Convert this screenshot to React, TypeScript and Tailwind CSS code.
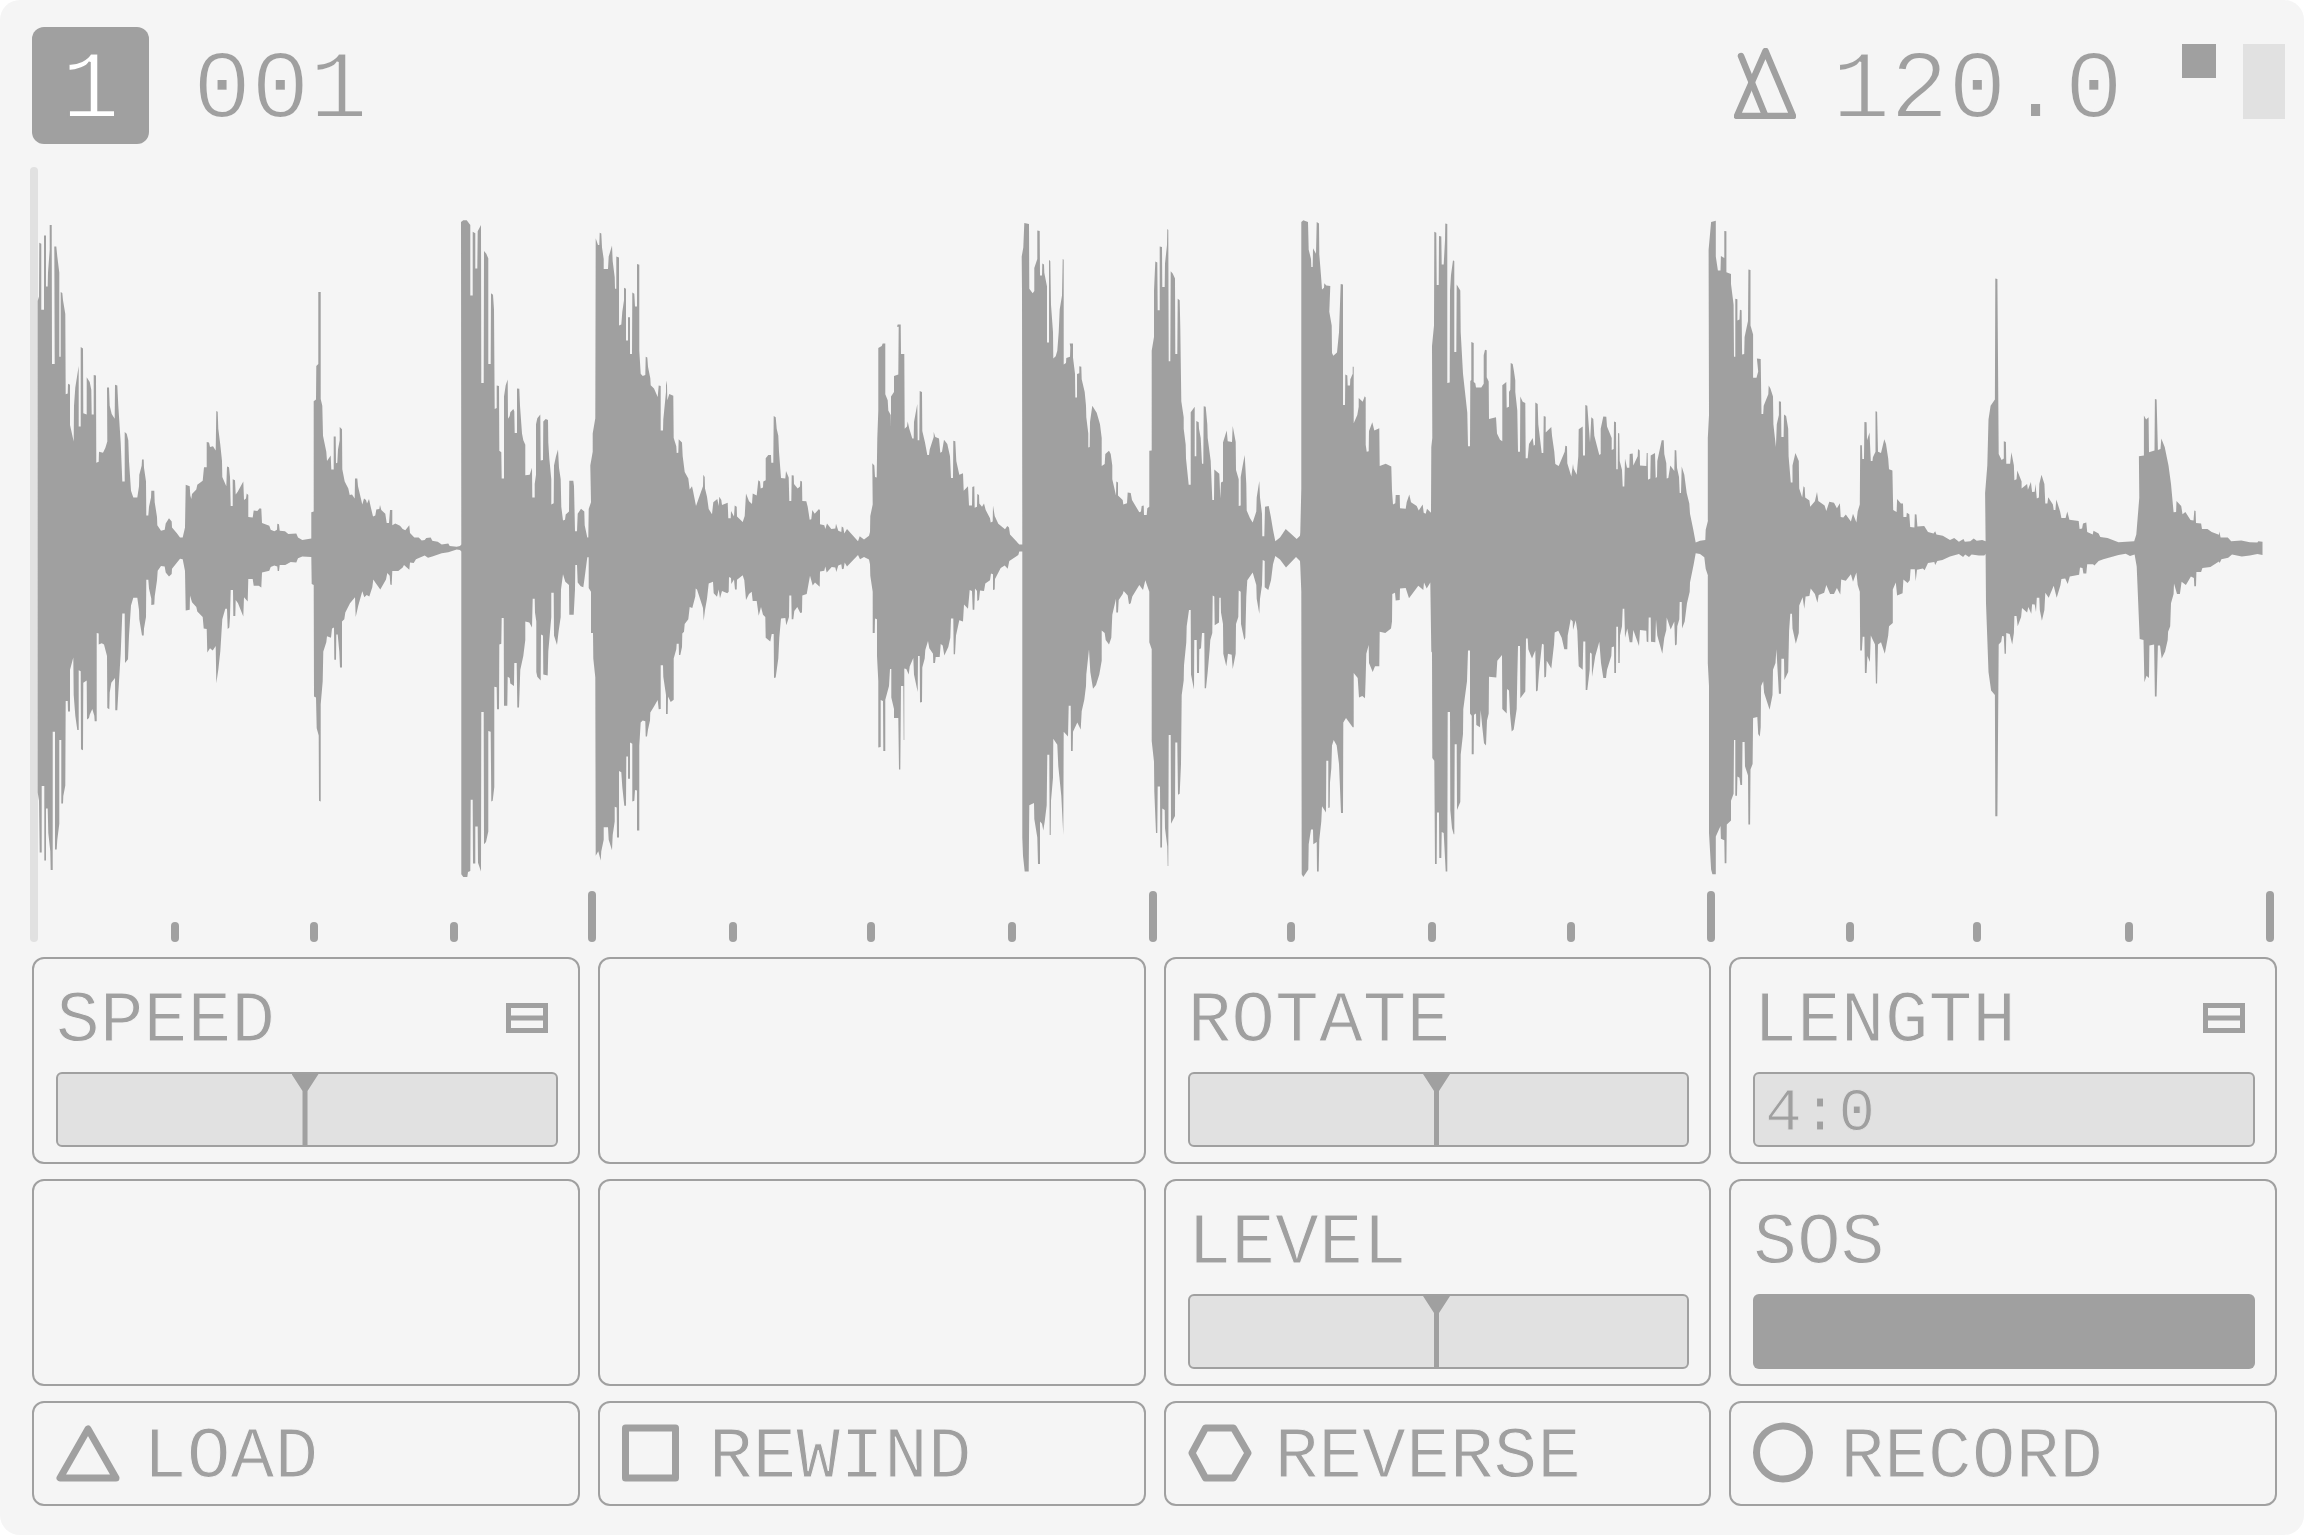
import type { ReactNode } from "react";

type Slice = {
  at: number;
  scale: number;
  upper: string;
  lower: string;
};

// Envelope of the loop, cut into slices. Every slice starts at its own x and
// holds the upper and the lower edge as "x,y" pairs.
const slices: Slice[] = [
  {
    at: 0,
    scale: 3,
    upper:
      "113,780 113,242 117,232 118,115 124,117 124,261 132,261 132,99 138,99 138,210 143,210 144,180 149,130 149,76 155,76 156,379 164,379 163,123 169,123 172,145 178,180 178,363 182,363 182,222 187,224 189,240 196,270 197,445 203,443 204,422 210,424 210,512 221,548 222,470 226,430 236,383 236,515 242,515 242,342 249,345 250,486 260,489 260,408 269,418 274,435 275,489 281,489 281,403 288,404 289,594 296,592 297,570 309,572 316,562 322,548 321,430 327,430 329,470 335,488 344,498 345,424 352,426 355,470 362,550 367,635 374,635 374,527 380,531 385,545 387,590 393,655 400,670 412,670 417,645 418,620 425,600 426,587 431,587 432,605 438,635 439,709 445,709 447,690 453,670 454,655 463,655 464,680 471,712 472,730 483,742 494,740 497,726 507,715 515,722 516,735 530,747 540,757 548,757 555,735 557,642 569,645 571,665 574,673 576,662 589,652 592,642 608,633 612,604 620,604 620,549 627,550 630,560 639,558 647,567 649,481 653,483 655,520 661,555 666,590 667,625 679,645 681,602 687,604 690,625 692,688 698,688 698,630 705,632 707,663 713,657 730,635 732,675 738,672 740,661 745,664 745,712 758,713 761,698 772,699 779,693 784,694 786,725 808,731 812,740 823,743 831,740 832,727 837,728 839,742 855,743 865,749 889,748 894,757 907,762 934,759 934,702 941,700 941,460 948,456 949,383 955,379 955,222 962,222 962,455 967,470 969,535 979,570 981,590 992,578 994,609 1001,609 1001,537 1007,537 1008,595 1012,594 1014,565 1019,545 1019,516 1026,521 1027,608 1034,635 1045,650 1049,664 1056,663 1064,672 1065,628 1072,628 1074,645 1087,685 1092,672 1098,675 1101,683 1107,673 1112,690 1119,711 1126,709 1129,696 1138,695 1140,686 1144,697 1156,705 1160,725 1167,725 1170,697 1177,697 1177,730 1186,726 1200,731 1208,738 1216,741 1228,730 1230,747 1243,757 1256,757 1265,763 1274,762 1279,758 1292,757 1297,764 1313,766 1325,772 1345,770 1349,775 1370,777 1380,775",
    lower:
      "113,1312 117,1330 119,1443 125,1443 125,1298 133,1298 133,1460 138,1460 138,1347 143,1347 145,1400 151,1440 152,1481 158,1481 158,1180 165,1180 165,1436 170,1436 172,1415 178,1380 178,1198 184,1198 184,1336 189,1336 190,1320 196,1297 197,1113 203,1113 204,1136 210,1136 210,1045 220,1018 221,1100 226,1145 232,1176 236,1176 236,1046 242,1048 243,1218 249,1220 250,1073 260,1068 261,1153 267,1150 269,1143 277,1130 283,1145 284,1157 290,1157 290,965 296,966 296,990 305,987 312,990 321,1015 322,1128 328,1131 329,1095 334,1073 345,1063 346,1133 352,1133 355,1095 362,1010 367,922 374,922 375,1030 384,1022 387,970 393,905 400,888 412,888 417,915 418,935 426,970 431,970 432,955 438,930 439,849 445,849 447,868 454,890 454,904 463,903 464,885 471,850 473,829 483,819 494,820 497,833 507,842 515,836 516,825 540,803 548,804 555,830 557,916 569,914 570,883 576,898 589,908 592,918 608,930 611,955 620,956 622,1007 630,998 638,1003 647,993 649,1074 655,1045 661,1005 667,935 676,912 681,912 683,956 688,953 690,930 692,871 699,871 700,928 706,928 707,893 714,900 730,929 732,887 743,896 745,847 758,847 761,862 776,862 784,866 786,833 808,829 812,821 823,818 832,820 833,830 837,830 839,817 856,817 872,810 889,811 894,802 907,798 934,799 935,858 941,860 942,1103 948,1105 950,1172 956,1188 957,1330 962,1332 962,1120 968,1070 970,1005 979,985 981,972 993,975 996,955 1002,953 1003,1023 1008,1023 1009,968 1013,968 1018,1005 1020,1040 1026,1040 1026,940 1033,935 1036,920 1050,900 1065,887 1067,930 1075,905 1087,874 1093,887 1100,882 1108,885 1117,865 1120,848 1126,855 1141,870 1158,848 1162,834 1169,840 1171,859 1175,860 1177,830 1195,830 1208,822 1212,817 1228,827 1230,811 1241,812 1248,804 1274,796 1284,801 1297,798 1325,791 1345,789 1370,783 1380,784",
  },
  {
    at: 440,
    scale: 3,
    upper:
      "64,772 63,70 70,66 80,66 91,76 91,230 98,230 98,91 106,94 106,171 112,171 113,90 123,76 124,420 131,420 132,133 139,139 145,149 145,379 152,379 153,225 159,228 162,260 164,477 170,475 170,426 177,427 178,568 184,571 185,628 192,628 192,450 197,425 203,413 204,498 209,492 211,484 220,477 223,482 224,529 231,529 231,432 238,433 240,470 246,530 250,545 256,555 256,621 269,620 276,605 277,670 284,670 284,640 288,620 288,510 292,497 301,489 302,589 309,588 310,504 317,499 324,501 325,550 328,585 334,630 334,685 341,682 342,600 348,580 354,565 357,605 362,630 364,690 369,720 375,718 377,707 387,700 388,633 400,633 402,645 405,743 411,743 413,705 423,694 433,700 434,730 442,757 445,757 446,695 453,680 451,600 458,570 458,530 466,497 467,105 474,120 478,120 479,93 484,95 486,125 491,150 491,172 504,172 506,145 516,121 518,155 524,190 525,215 529,215 529,145 537,147 537,295 544,293 547,265 552,240 552,213 558,215 558,328 564,328 564,277 570,277 570,357 576,357 577,223 583,226 585,254 591,254 591,161 598,163 598,350 602,400 608,405 616,403 617,363 622,365 624,385 631,410 632,425 642,432 653,451 656,426 662,427 662,524 669,524 670,500 678,440 678,415 681,425 682,458 688,444 700,448 701,540 709,558 710,573 715,572 716,543 726,550 728,580 734,614 745,628 749,652 756,645 759,655 768,688 777,670 789,645 790,620 794,625 795,650 801,668 806,695 816,706 820,680 832,673 836,688 838,668 844,675 846,686 863,681 865,715 872,715 873,699 882,711 884,687 890,690 891,711 908,723 914,710 918,661 927,678 936,684 938,661 950,665 955,632 960,635 962,650 969,648 970,635 977,632 977,584 985,577 993,577 994,594 1000,594 1001,492 1007,495 1010,520 1015,535 1017,570 1023,627 1036,628 1038,612 1046,626 1048,677 1054,677 1055,621 1061,622 1062,640 1073,650 1080,646 1081,633 1086,635 1087,677 1099,678 1103,690 1109,718 1114,717 1117,697 1124,705 1137,695 1140,698 1140,728 1153,730 1156,738 1161,726 1174,738 1186,737 1188,727 1195,742 1204,745 1205,733 1210,735 1213,748 1221,738 1254,765 1259,754 1272,761 1287,753",
    lower:
      "64,787 64,1490 70,1496 82,1496 84,1485 91,1483 92,1328 98,1328 99,1467 106,1467 106,1386 113,1386 114,1465 123,1484 124,1137 131,1137 132,1425 138,1420 145,1397 145,1178 152,1180 154,1332 158,1330 163,1300 163,1082 170,1083 171,1131 177,1131 178,990 184,988 185,932 191,932 192,1123 202,1123 203,1060 209,1063 211,1075 222,1080 223,1030 230,1030 232,1127 237,1127 241,1045 250,1015 256,980 256,940 268,942 276,953 278,890 284,890 285,920 289,940 289,1050 292,1060 302,1068 303,968 309,970 310,1055 323,1057 325,1005 329,970 334,930 334,877 341,877 342,970 351,991 356,960 362,930 363,870 369,837 376,853 387,860 388,925 401,925 405,870 406,817 411,817 413,855 422,863 430,865 433,850 442,800 446,800 446,867 453,875 453,965 459,965 460,1020 466,1062 467,1450 475,1440 482,1460 484,1440 491,1415 491,1388 504,1388 506,1415 516,1438 518,1405 524,1375 524,1343 530,1345 531,1410 537,1410 537,1265 544,1268 547,1300 553,1341 558,1341 559,1234 564,1234 564,1282 570,1282 570,1203 577,1206 577,1332 583,1330 585,1307 591,1308 591,1395 598,1395 598,1210 602,1160 608,1155 616,1157 617,1190 621,1190 624,1175 630,1155 631,1138 642,1125 653,1111 656,1131 662,1130 662,1035 669,1035 670,1060 678,1100 678,1141 683,1141 684,1103 692,1115 701,1110 701,1020 709,1000 710,988 716,988 717,1013 721,1013 726,995 727,966 732,962 734,945 745,935 749,908 757,910 766,885 767,868 771,870 789,910 791,938 795,915 801,890 806,857 819,853 821,878 831,886 836,870 840,889 846,873 862,878 866,875 867,843 873,845 874,858 882,848 885,870 890,870 891,849 908,839 913,850 918,893 927,880 935,875 938,895 950,895 956,927 963,908 969,925 976,930 977,975 991,983 995,967 1001,967 1002,1063 1007,1062 1015,1020 1018,975 1023,933 1036,932 1039,948 1047,930 1048,883 1054,883 1055,935 1060,935 1063,917 1072,908 1081,921 1086,920 1087,883 1100,880 1103,868 1110,840 1118,861 1125,855 1139,864 1140,831 1153,829 1156,820 1160,833 1175,821 1186,822 1189,832 1195,818 1204,815 1206,826 1211,825 1214,811 1221,820 1254,795 1260,804 1272,799 1287,805",
  },
  {
    at: 840,
    scale: 3,
    upper:
      "90,745 91,710 98,685 97,595 103,600 105,625 110,626 112,540 115,480 115,344 125,340 128,334 136,334 136,445 143,458 145,480 152,490 153,517 153,450 162,440 162,405 175,402 176,298 171,298 173,293 182,293 183,357 193,357 194,520 201,515 203,504 208,520 217,541 221,541 222,505 232,466 233,545 238,545 239,438 246,440 247,525 255,550 262,577 267,577 269,565 281,538 281,527 286,538 297,541 301,572 306,570 312,544 322,553 330,580 333,627 339,627 340,546 346,547 349,590 358,620 369,617 371,655 384,645 387,687 396,687 397,647 403,645 404,692 411,690 412,662 417,664 418,683 426,690 432,683 437,697 450,715 452,724 458,722 459,687 464,710 475,727 495,739 502,732 507,735 510,750 538,772 547,772 546,220 545,145 550,125 553,72 567,74 568,215 578,225 583,220 583,170 592,150 592,88 599,89 600,186 606,186 607,160 612,162 613,180 621,210 621,332 627,332 627,152 631,155 633,250 639,310 640,367 647,362 652,350 656,310 659,260 666,230 668,150 671,152 671,380 678,377 679,366 690,363 691,342 689,334 699,334 699,365 705,400 706,452 711,452 711,401 718,399 718,384 724,385 725,412 734,440 738,470 739,495 745,530 745,561 749,560 750,505 757,470 770,485 780,510 785,540 785,601 794,597 796,575 807,568 812,575 817,600 817,630 828,665 829,635 834,637 834,665 848,675 850,685 861,682 863,659 872,660 876,675 898,702 903,700 905,688 911,687 912,708 920,708 922,693 928,690 928,568 935,567 935,350 942,320 942,220 946,156 952,158 953,262 959,262 959,123 966,124 967,211 974,211 975,160 981,120 982,85 985,87 986,373 991,373 992,177 998,182 1005,193 1006,357 1012,357 1013,237 1019,240 1021,300 1024,460 1031,495 1031,520 1037,555 1038,585 1046,642 1052,642 1052,484 1064,472 1064,580 1069,580 1069,503 1076,506 1077,520 1082,540 1086,596 1090,596 1091,471 1097,472 1102,510 1103,540 1112,590 1117,675 1122,675 1123,609 1138,618 1141,672 1143,637 1149,635 1149,550 1160,524 1163,547 1176,549 1178,514 1187,549 1188,610 1196,630 1196,688 1202,687 1202,625 1208,600 1214,577 1219,640 1220,698 1230,715 1238,724 1249,700 1250,670 1258,634 1260,670 1266,705 1267,754 1273,754 1275,690 1286,688 1292,710 1299,740 1306,765 1320,757 1337,738 1370,760 1380,753",
    lower:
      "90,815 91,840 98,875 98,965 104,965 105,933 111,935 111,1015 115,1070 115,1214 122,1213 122,1111 129,1113 130,1222 136,1222 136,1110 147,1080 150,1043 154,1043 154,1105 162,1130 162,1150 175,1150 177,1262 181,1262 183,1080 190,1080 191,1198 193,1198 193,1042 199,1043 206,1055 209,1038 220,1019 222,1055 233,1093 234,1015 239,1015 240,1116 246,1115 247,1040 254,1020 256,1002 264,982 268,998 279,1010 280,1030 285,1030 287,1017 299,1017 302,989 308,992 313,1014 325,995 331,975 333,933 340,933 341,1011 345,1011 348,970 358,937 369,940 372,903 384,912 389,871 396,873 398,914 403,914 405,868 411,873 412,895 417,893 420,872 432,873 436,857 450,850 453,835 459,837 459,871 464,870 465,847 482,823 494,818 503,825 508,808 535,795 538,787 547,787 547,1410 549,1450 554,1484 566,1484 568,1340 582,1335 583,1370 592,1410 594,1468 600,1468 600,1375 606,1380 610,1395 614,1375 620,1340 622,1230 628,1230 629,1405 632,1405 633,1330 639,1280 640,1195 652,1208 655,1255 664,1320 670,1405 671,1180 684,1190 686,1123 692,1123 693,1222 698,1222 699,1180 712,1160 722,1175 725,1135 733,1110 738,1080 739,1055 747,1000 751,1050 759,1086 768,1078 778,1055 785,1025 785,959 794,965 797,980 807,990 814,975 817,925 828,890 829,920 834,920 836,893 848,880 851,873 863,883 867,902 872,900 877,885 898,860 909,871 916,850 928,875 928,985 935,1000 935,1200 942,1245 943,1310 948,1400 952,1400 953,1299 960,1299 961,1432 966,1432 967,1347 974,1350 975,1390 982,1430 983,1472 985,1472 986,1187 992,1187 993,1380 1005,1363 1006,1203 1012,1203 1014,1317 1019,1315 1023,1250 1025,1100 1031,1068 1032,1035 1039,985 1040,950 1047,915 1052,915 1053,1055 1062,1088 1063,980 1070,980 1071,1052 1077,1052 1078,1000 1083,998 1086,965 1093,965 1094,1085 1098,1085 1103,1050 1109,1000 1111,980 1117,965 1118,883 1123,885 1124,948 1137,942 1138,888 1142,888 1143,920 1149,945 1150,1010 1159,1037 1164,1010 1175,1012 1178,1043 1187,1010 1188,945 1195,930 1196,872 1202,875 1203,945 1213,980 1216,975 1219,885 1222,850 1238,833 1249,860 1250,890 1258,923 1260,890 1266,860 1268,806 1274,808 1274,865 1285,871 1293,850 1299,815 1306,797 1320,805 1338,822 1368,799 1380,808",
  },
  {
    at: 1240,
    scale: 3,
    upper:
      "181,745 184,650 184,70 190,66 204,70 206,130 213,150 214,168 218,168 219,127 228,139 230,70 237,73 238,140 244,195 246,217 252,213 253,203 259,208 271,209 268,265 275,295 276,355 280,361 291,354 297,310 302,205 309,206 309,468 315,468 316,402 322,404 323,426 330,426 331,412 338,400 338,385 341,385 341,508 352,490 356,472 356,453 368,461 374,449 377,452 377,555 380,570 386,569 387,525 397,506 403,524 418,519 419,601 437,596 454,602 456,655 459,685 466,682 467,664 479,664 480,693 497,694 500,680 508,663 513,680 530,688 536,698 548,685 551,703 557,705 561,694 573,703 574,560 577,540 576,340 582,295 583,91 589,93 590,207 596,207 597,100 604,101 605,162 611,162 615,110 616,73 622,74 622,420 629,419 630,220 633,185 639,153 643,155 643,353 649,353 650,206 661,219 662,310 669,400 682,485 684,558 690,558 691,416 694,414 694,331 701,333 701,418 706,421 708,430 724,430 731,422 731,360 735,348 740,349 740,408 746,417 747,499 768,495 771,530 780,544 787,547 787,425 799,418 800,474 807,472 807,440 811,435 812,377 818,379 822,395 826,415 826,440 832,480 834,570 840,570 841,450 848,461 856,464 857,584 863,584 867,553 878,540 881,557 885,555 886,463 893,466 895,510 905,573 910,573 911,492 917,494 917,528 934,516 936,535 943,570 946,597 956,601 974,570 976,557 981,558 982,595 994,624 999,597 1001,607 1010,620 1015,580 1016,521 1028,515 1029,578 1035,578 1036,468 1042,470 1045,500 1050,550 1054,495 1060,499 1063,535 1078,577 1082,575 1082,520 1090,493 1099,494 1101,515 1115,540 1115,566 1121,564 1122,504 1128,506 1129,608 1133,608 1134,529 1138,530 1139,590 1146,610 1148,646 1153,646 1155,585 1161,605 1168,605 1169,575 1178,574 1180,600 1193,580 1194,564 1199,567 1200,600 1219,601 1220,573 1223,573 1224,631 1231,628 1232,578 1245,573 1247,627 1251,625 1252,590 1265,545 1271,545 1273,575 1279,595 1280,628 1285,627 1291,600 1303,612 1304,566 1309,567 1311,605 1317,625 1319,660 1323,660 1325,602 1333,620 1340,660 1348,683 1350,705 1360,740 1367,768 1380,764 1396,762 1397,740 1404,720",
    lower:
      "181,820 184,875 185,1490 190,1496 205,1480 206,1425 213,1393 219,1393 220,1425 230,1420 231,1484 236,1484 238,1415 244,1375 246,1342 258,1356 259,1243 265,1243 265,1346 269,1345 270,1290 274,1260 276,1210 281,1198 290,1210 297,1250 303,1357 309,1357 310,1160 318,1150 338,1170 341,1170 341,1052 353,1063 357,1105 367,1102 375,1107 377,1060 379,1010 386,991 387,1030 398,1050 405,1037 418,1037 419,962 436,965 453,955 456,940 457,880 465,877 467,894 479,893 480,868 497,867 507,889 535,862 550,871 552,855 560,868 571,855 574,1005 576,1007 577,1237 583,1243 585,1468 590,1468 591,1356 597,1356 598,1455 604,1455 605,1398 611,1400 617,1484 622,1484 623,1137 630,1137 631,1350 636,1390 641,1403 643,1403 644,1207 650,1207 651,1350 661,1333 662,1230 669,1185 670,1130 681,1070 684,1003 690,1003 690,1140 695,1145 695,1229 701,1229 702,1143 708,1140 709,1165 720,1170 722,1133 727,1170 732,1205 738,1210 741,1155 746,1140 747,1060 769,1062 772,1025 786,1013 787,1130 800,1140 801,1087 807,1090 810,1140 815,1179 821,1175 830,1130 832,1060 834,993 840,993 841,1107 856,1092 858,977 863,977 865,1000 876,1020 886,1003 888,1092 893,1090 897,1050 906,988 911,990 913,1062 918,1060 920,1025 934,1042 942,990 944,964 955,960 965,975 973,1000 982,1000 983,970 992,935 998,940 999,958 1007,937 1012,960 1016,1037 1028,1045 1030,983 1036,983 1037,1089 1042,1089 1049,1045 1050,1007 1055,1010 1056,1060 1066,1015 1078,984 1083,1030 1090,1063 1098,1063 1101,1045 1114,1015 1115,996 1122,994 1123,1052 1128,1052 1129,951 1134,951 1135,1030 1139,1030 1140,970 1146,950 1148,912 1153,912 1155,975 1162,955 1169,985 1177,985 1180,958 1197,993 1200,958 1219,960 1220,983 1225,985 1226,931 1232,931 1233,984 1246,985 1248,935 1252,970 1267,1010 1273,975 1279,958 1280,931 1292,957 1303,940 1305,992 1310,990 1312,950 1318,935 1319,897 1325,897 1326,955 1334,940 1341,900 1349,875 1350,855 1361,815 1367,791 1380,793 1393,800 1397,825 1404,840",
  },
  {
    at: 1640,
    scale: 2.3614,
    upper:
      "160,720 160,540 163,490 162,130 168,70 179,67 179,145 184,175 190,175 191,144 199,148 199,89 204,90 204,179 215,183 215,205 221,250 222,363 225,363 225,237 230,238 230,284 235,282 236,261 240,262 241,358 246,357 247,320 255,285 256,173 261,174 261,295 267,315 267,409 275,409 279,395 276,367 285,368 287,488 291,488 292,470 303,445 304,426 308,432 314,450 315,510 321,560 323,510 328,490 328,460 333,461 334,538 339,538 340,489 345,492 350,520 351,580 356,637 360,637 360,600 367,573 375,590 376,650 383,670 386,645 389,648 390,670 400,676 402,690 413,678 418,658 421,677 436,687 440,699 447,679 458,681 465,693 472,682 474,712 480,713 486,707 498,722 503,705 511,724 514,700 519,685 520,556 524,556 525,586 529,586 530,505 535,506 536,545 542,528 545,590 549,590 550,582 556,570 556,482 560,483 562,570 569,573 577,543 581,553 586,585 588,608 596,611 598,697 606,701 607,673 616,683 621,683 622,712 629,712 630,703 636,706 638,734 648,735 649,706 653,707 655,733 671,732 680,745 693,748 697,743 700,750 715,753 732,762 742,758 753,766 764,760 767,766 780,765 788,759 795,764 808,762 816,765 815,660 820,600 823,500 828,470 838,456 839,193 844,194 847,575 854,588 859,585 859,547 864,549 865,596 874,596 877,571 883,600 884,632 889,630 891,611 901,635 901,650 914,640 916,653 923,636 926,658 932,657 934,640 937,672 942,670 943,640 948,620 955,640 957,683 962,683 964,669 975,685 977,697 981,697 983,674 992,700 995,714 1005,714 1009,700 1014,718 1036,721 1038,738 1044,737 1046,726 1054,724 1056,745 1069,750 1071,742 1083,748 1087,756 1104,758 1130,767 1167,765 1172,750 1179,670 1178,580 1190,578 1190,491 1195,500 1201,495 1202,571 1215,567 1216,455 1220,456 1223,566 1229,564 1231,541 1239,560 1248,600 1254,640 1260,702 1266,701 1267,677 1278,688 1281,706 1288,701 1300,719 1307,720 1309,698 1312,699 1313,725 1325,726 1327,738 1340,738 1350,745 1367,751 1368,744 1371,757 1388,757 1396,765 1420,763 1440,767 1458,768 1460,765 1470,766",
    lower:
      "160,840 160,1030 163,1080 163,1400 168,1480 171,1490 179,1490 179,1408 190,1385 191,1413 199,1416 200,1466 204,1466 205,1382 215,1373 215,1330 221,1315 222,1198 225,1198 225,1319 229,1319 230,1277 235,1280 237,1296 241,1296 242,1202 247,1202 248,1255 255,1275 256,1382 260,1382 261,1262 266,1250 267,1150 277,1148 279,1185 283,1190 285,1170 286,1080 291,1070 293,1095 306,1132 313,1100 314,1045 320,1030 322,1000 328,1097 333,1097 334,1021 340,1021 341,1067 350,1050 352,960 355,923 359,923 360,955 368,988 375,965 376,905 384,887 388,912 391,885 400,884 403,868 413,880 419,899 422,882 435,877 440,860 449,880 458,880 465,867 473,881 475,848 486,851 498,837 503,853 511,833 514,860 519,875 520,1003 524,1003 526,973 530,973 531,1052 535,1052 537,1015 543,1028 545,970 555,990 557,1075 560,1075 562,990 569,985 578,1010 586,970 588,950 597,943 597,870 604,855 607,883 620,878 622,848 632,856 637,850 639,826 649,826 651,852 654,827 668,824 672,828 680,812 695,810 697,817 702,808 714,806 732,798 753,793 763,799 768,794 777,799 783,794 800,796 813,796 816,793 817,900 823,1050 829,1090 838,1100 839,1364 844,1364 847,990 853,984 855,971 859,972 861,1010 864,1010 865,965 873,967 879,990 883,965 884,928 889,928 892,950 900,930 902,910 914,920 917,908 924,923 926,902 932,903 935,919 937,888 943,888 944,915 949,938 955,915 957,877 965,888 977,862 984,888 993,860 995,847 1004,846 1010,858 1015,842 1037,838 1039,822 1045,823 1047,835 1054,835 1056,815 1070,815 1073,818 1083,808 1094,804 1130,795 1147,792 1157,797 1168,794 1173,820 1180,978 1189,980 1191,1072 1196,1058 1202,1063 1203,992 1214,990 1216,1103 1220,1103 1223,992 1228,992 1232,1020 1240,1005 1246,980 1247,962 1252,950 1254,900 1260,880 1261,857 1268,880 1275,880 1279,853 1289,860 1301,842 1308,845 1309,863 1313,863 1314,832 1325,832 1328,823 1347,821 1367,809 1369,812 1373,804 1389,801 1398,794 1421,798 1440,796 1458,793 1470,795",
  },
];

const toPoints = (slice: Slice, edge: string) =>
  edge.split(" ").map((pair) => {
    const [x, y] = pair.split(",").map(Number);
    return `${(slice.at + x / slice.scale).toFixed(1)},${(23 + y / 2.1778).toFixed(1)}`;
  });

const wavePoints = [
  ...slices.flatMap((s) => toPoints(s, s.upper)),
  ...slices.flatMap((s) => toPoints(s, s.lower)).reverse(),
].join(" ");

const beats = [
  { x: 175, bar: false },
  { x: 314, bar: false },
  { x: 454, bar: false },
  { x: 592, bar: true },
  { x: 733, bar: false },
  { x: 871, bar: false },
  { x: 1012, bar: false },
  { x: 1153, bar: true },
  { x: 1291, bar: false },
  { x: 1432, bar: false },
  { x: 1571, bar: false },
  { x: 1711, bar: true },
  { x: 1850, bar: false },
  { x: 1977, bar: false },
  { x: 2129, bar: false },
  { x: 2270, bar: true },
];

const Waveform = () => (
  <svg viewBox="0 0 2304 775" className="mt-[23px] block w-full" role="img" aria-label="Loop waveform">
    <rect x="30" y="0" width="8" height="775" rx="4" fill="#e1e1e1" />
    <polygon points={wavePoints} fill="#a0a0a0" />
    {beats.map((beat) => (
      <rect
        key={beat.x}
        x={beat.x - 4}
        y={beat.bar ? 724 : 755}
        width="8"
        height={beat.bar ? 51 : 20}
        rx="4"
        fill="#a0a0a0"
      />
    ))}
  </svg>
);

const MetronomeIcon = () => (
  <svg
    viewBox="0 0 62 71"
    className="mb-1 h-[71px] w-[62px]"
    fill="none"
    stroke="currentColor"
    strokeWidth="6.5"
    strokeLinecap="round"
    strokeLinejoin="round"
  >
    <path d="M31.5 3 3 68h56L31.5 3Z" />
    <path d="M7 8 31 67" />
  </svg>
);

const LinkIcon = () => (
  <svg viewBox="0 0 42 30" className="mt-7 mr-[10px] h-[30px] w-[42px]" fill="none" stroke="currentColor" strokeWidth="5">
    <path d="M2.500 2.500h37v25h-37zM2.500 15h37" />
  </svg>
);

const Panel = ({ children }: { children?: ReactNode }) => (
  <div className="rounded-[12px] border-2 border-[#a0a0a0] pt-4 pr-5 pb-[15px] pl-[22px]">{children}</div>
);

const PanelLabel = ({ id, text, linked }: { id: string; text: string; linked?: boolean }) => (
  <div className="mb-1 flex h-[93px] items-start justify-between">
    <label htmlFor={id} className="text-[73px] leading-[93px]">
      {text}
    </label>
    {linked && <LinkIcon />}
  </div>
);

const Slider = ({ id }: { id: string }) => (
  <input
    id={id}
    type="range"
    min={0}
    max={127}
    defaultValue={63}
    className="block h-[75px] w-full appearance-none rounded-md border-2 border-[#a0a0a0] bg-[#e1e1e1] [&::-webkit-slider-runnable-track]:h-full [&::-webkit-slider-thumb]:h-[71px] [&::-webkit-slider-thumb]:w-[27px] [&::-webkit-slider-thumb]:appearance-none [&::-webkit-slider-thumb]:bg-[#a0a0a0] [&::-webkit-slider-thumb]:[clip-path:polygon(0_0,100%_0,16px_17px,16px_100%,11px_100%,11px_17px)]"
  />
);

const actions = [
  { label: "LOAD", shape: <path d="M32 7 4 56h56Z" /> },
  { label: "REWIND", shape: <path d="M3.500 6h50v50h-50z" /> },
  { label: "REVERSE", shape: <path d="M17.500 6h28L60 31 45.500 56h-28L4 31Z" /> },
  { label: "RECORD", shape: <circle cx="30" cy="30.500" r="26.500" /> },
];

const App = () => {
  return (
    <div className="min-h-screen bg-white">
      {/* The thin outline in the background colour gives the lettering its light weight */}
      <main className="rounded-[20px] bg-[#f5f5f5] pt-[27px] pb-[29px] font-['Liberation_Mono',monospace] text-[#a0a0a0] [-webkit-text-stroke:1px_#f5f5f5]">
        {/* Track and tempo */}
        <header className="flex items-center justify-between pr-[19px] pl-8 text-[97px] leading-none [-webkit-text-stroke:2px_#f5f5f5]">
          <div className="flex items-center gap-11">
            <button className="flex size-[117px] items-center justify-center rounded-[12px] bg-[#a0a0a0] pt-3 text-white [-webkit-text-stroke:2px_#a0a0a0]">
              1
            </button>
            <h1 className="pt-3">001</h1>
          </div>
          <div className="flex items-center">
            <MetronomeIcon />
            <span className="ml-9 pt-3">120.0</span>
            <div className="ml-[59px] flex h-[83px] items-start gap-[27px]">
              <span className="size-[34px] bg-[#a0a0a0]" />
              <span className="h-[75px] w-[42px] bg-[#e1e1e1]" />
            </div>
          </div>
        </header>

        <Waveform />

        {/* Parameters */}
        <section className="mt-[15px] grid grid-cols-4 gap-x-[18px] gap-y-[15px] pr-[27px] pl-8">
          <Panel>
            <PanelLabel id="speed" text="SPEED" linked />
            <Slider id="speed" />
          </Panel>
          <Panel />
          <Panel>
            <PanelLabel id="rotate" text="ROTATE" />
            <Slider id="rotate" />
          </Panel>
          <Panel>
            <PanelLabel id="length" text="LENGTH" linked />
            <input
              id="length"
              type="text"
              defaultValue="4:0"
              className="block h-[75px] w-full rounded-md border-2 border-[#a0a0a0] bg-[#e1e1e1] pt-2 pl-[10px] text-[61px] leading-none [-webkit-text-stroke:1px_#e1e1e1]"
            />
          </Panel>
          <Panel />
          <Panel />
          <Panel>
            <PanelLabel id="level" text="LEVEL" />
            <Slider id="level" />
          </Panel>
          <Panel>
            <PanelLabel id="sos" text="SOS" />
            <input
              id="sos"
              type="range"
              defaultValue={100}
              className="block h-[75px] w-full appearance-none rounded-md bg-[#a0a0a0] [&::-webkit-slider-thumb]:appearance-none"
            />
          </Panel>

          {/* Actions */}
          {actions.map((action) => (
            <button
              key={action.label}
              className="flex h-[105px] items-center gap-[23px] rounded-[12px] border-2 border-[#a0a0a0] pl-[22px] text-[73px] leading-none"
            >
              <svg viewBox="0 0 64 64" className="size-16" fill="none" stroke="currentColor" strokeWidth="7" strokeLinejoin="round">
                {action.shape}
              </svg>
              <span className="pt-2">{action.label}</span>
            </button>
          ))}
        </section>
      </main>
    </div>
  );
};

export default App;
